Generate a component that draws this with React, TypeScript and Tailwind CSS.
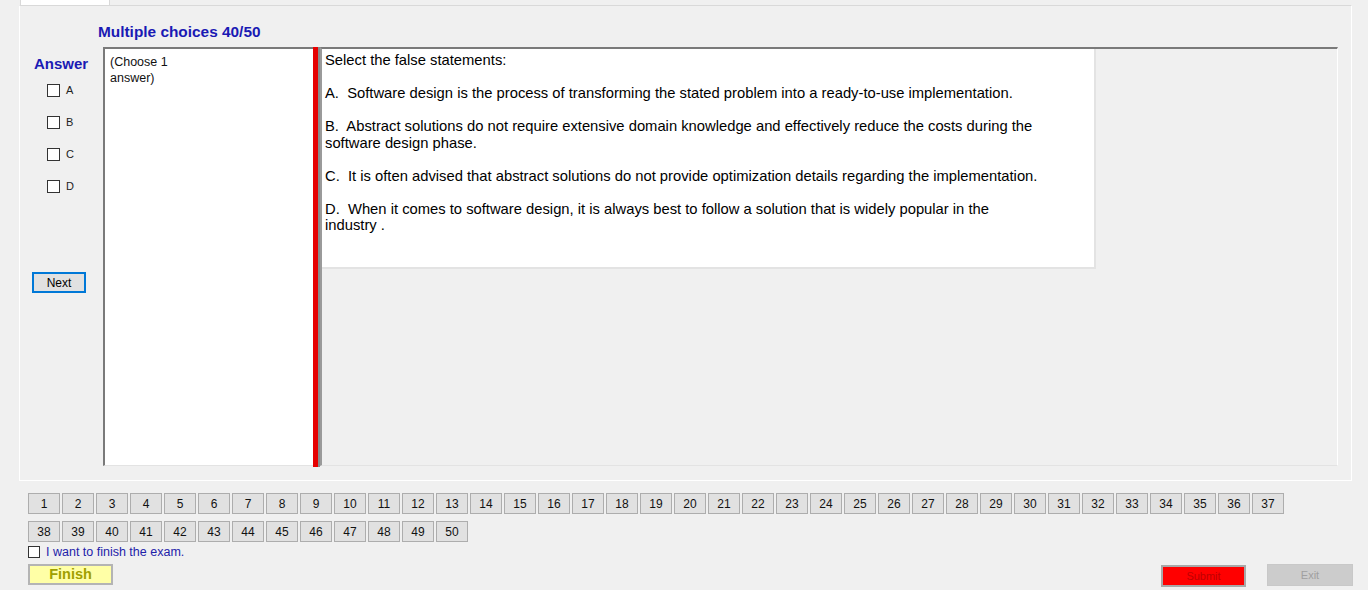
import React from "react";

const nums = Array.from({ length: 50 }, (_, i) => i + 1);

function Box({ size = 13 }: { size?: number }) {
  return (
    <div
      className="bg-white border border-[#333333] shrink-0"
      style={{ width: size, height: size }}
    />
  );
}

export default function App() {
  return (
    <div
      className="w-[1372px] h-[594px] bg-white overflow-hidden"
      style={{ fontFamily: '"Liberation Sans", Arial, sans-serif' }}
    >
      <div className="w-[1368px] h-[590px] bg-[#f0f0f0] flex flex-col">
        {/* tab header */}
        <div className="h-[5px] flex">
          <div className="ml-[20px] w-[90px] h-[5px] bg-white border-x border-[#d9d9d9]" />
        </div>
        {/* tab body */}
        <div className="ml-[19px] w-[1333px] h-[476px] border-t border-t-[#d9d9d9] border-l border-r border-b border-white flex flex-col">
          <div className="mt-[17px] ml-[78px] h-[17px] leading-[17px] text-[15.4px] font-bold text-[#1a1ab4]">
            Multiple choices 40/50
          </div>
          <div className="mt-[7px] h-[419px] flex">
            {/* left column */}
            <div className="w-[83px] flex flex-col">
              <div className="mt-[8px] ml-[14px] h-[17px] leading-[17px] text-[15px] font-bold text-[#1a1ab4]">
                Answer
              </div>
              <div className="mt-[2px] flex flex-col">
                {["A", "B", "C", "D"].map((l) => (
                  <div key={l} className="h-[32px] flex items-center pl-[27px] gap-[6px]">
                    <Box />
                    <span className="text-[11px] text-[#222]">{l}</span>
                  </div>
                ))}
              </div>
              <button className="mt-[70px] ml-[12px] w-[54px] h-[21px] border-2 border-[#0078d7] bg-[#e1e1e1] text-[12px] text-black leading-none flex items-center justify-center">
                Next
              </button>
            </div>
            {/* choose box */}
            <div className="w-[210px] h-full bg-white border-t-2 border-l-2 border-t-[#7a7a7a] border-l-[#7a7a7a] border-b border-b-[#e3e3e3] pl-[5px] pt-[5px] text-[12.5px] leading-[16px] text-[#111]">
              (Choose 1<br />answer)
            </div>
            {/* red bar */}
            <div className="w-[7px] h-[420px] flex">
              <div className="w-[5px] bg-[#e60000]" />
              <div className="w-[2px] bg-[#8a8a8a]" />
            </div>
            {/* right panel */}
            <div className="w-[1018px] h-full border-t-2 border-l-2 border-t-[#7a7a7a] border-l-[#9a9a9a] border-r border-b border-r-white border-b-[#e3e3e3] flex flex-col">
              <div className="w-[774px] h-[220px] bg-white border-r-2 border-b-2 border-r-[#e3e3e3] border-b-[#e3e3e3] pl-[3px] pt-[3px]">
                <div className="w-[717px] text-[14.78px] leading-[16.5px] text-black whitespace-pre-wrap">
                  {"Select the false statements:\n\nA.  Software design is the process of transforming the stated problem into a ready-to-use implementation.\n\nB.  Abstract solutions do not require extensive domain knowledge and effectively reduce the costs during the software design phase.\n\nC.  It is often advised that abstract solutions do not provide optimization details regarding the implementation.\n\nD.  When it comes to software design, it is always best to follow a solution that is widely popular in the industry ."}
                </div>
              </div>
            </div>
          </div>
        </div>
        {/* question nav */}
        <div className="mt-[12px] ml-[28px] w-[1258px] flex flex-wrap gap-x-[2px] gap-y-[7px]">
          {nums.map((n) => (
            <button
              key={n}
              className="w-[32px] h-[21px] border border-[#adadad] bg-[#e1e1e1] text-[12px] text-[#111] leading-none flex items-center justify-center"
            >
              {n}
            </button>
          ))}
        </div>
        <div className="mt-[3px] ml-[28px] h-[14px] flex items-center gap-[6px]">
          <Box size={12} />
          <span className="text-[12.5px] text-[#1e22aa] leading-none">I want to finish the exam.</span>
        </div>
        <div className="mt-[5px] ml-[28px] w-[1325px] flex items-start">
          <button className="w-[85px] h-[21px] border-2 border-[#b4b4b4] bg-[#ffffa6] text-[14.5px] font-bold text-[#a0a000] leading-none flex items-center justify-center">
            Finish
          </button>
          <div className="flex-1" />
          <button className="mt-[1px] w-[85px] h-[22px] border-2 border-[#a8a8a8] bg-[#ff0000] text-[11px] text-[#c00000] leading-none flex items-center justify-center">
            Submit
          </button>
          <button className="ml-[21px] w-[86px] h-[22px] border border-[#c8c8c8] bg-[#cccccc] text-[11px] text-[#a0a0a0] leading-none flex items-center justify-center">
            Exit
          </button>
        </div>
      </div>
    </div>
  );
}
